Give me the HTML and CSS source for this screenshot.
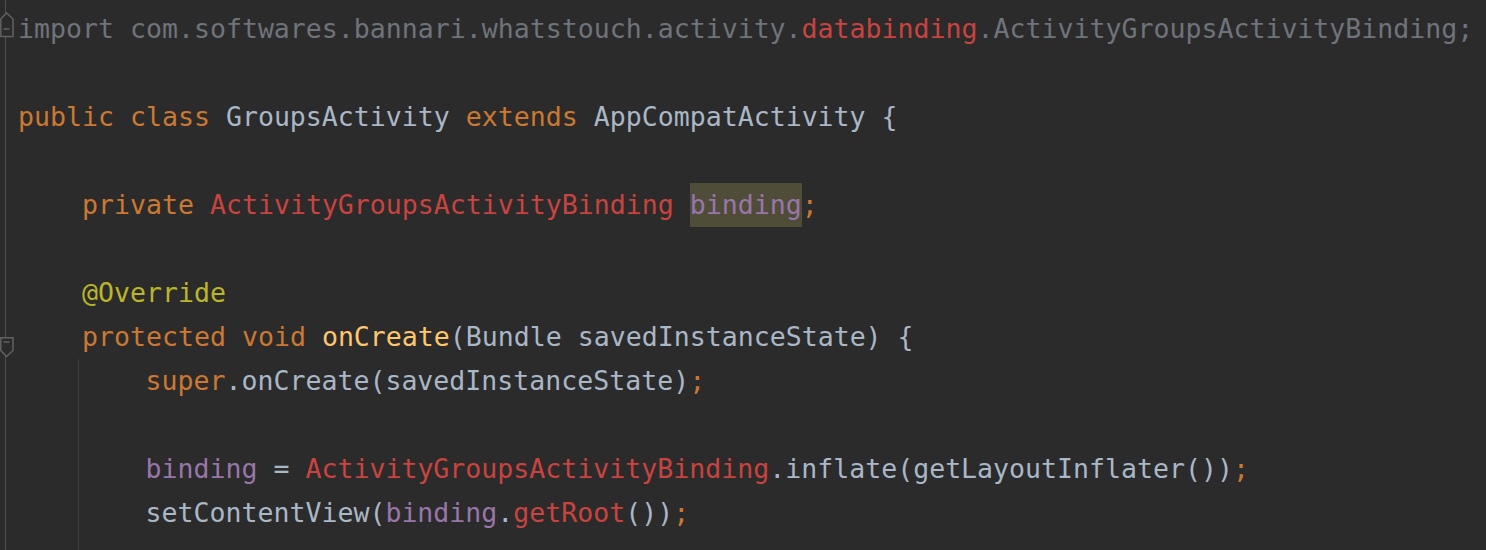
FILE: index.html
```html
<!DOCTYPE html>
<html>
<head>
<meta charset="utf-8">
<link rel="stylesheet" href="styles.css">
</head>
<body>
<div class="editor">
  <div class="gutter">
    <div class="grow"><svg class="fold-open" width="14" height="26" viewBox="0 0 14 26"><path d="M6.5 0.8 L13 7 L13 24.5 L0.8 24.5 L0.8 7 Z" fill="#2b2b2b" stroke="#626262" stroke-width="1.5"/><path d="M3.5 17 H9.5" stroke="#626262" stroke-width="1.5"/></svg></div>
    <div class="grow"></div>
    <div class="grow"></div>
    <div class="grow"></div>
    <div class="grow"></div>
    <div class="grow"></div>
    <div class="grow"></div>
    <div class="grow"><svg class="fold-close" width="14" height="21" viewBox="0 0 14 21"><path d="M0.8 0.8 L13 0.8 L13 13.5 L6.5 19.5 L0.8 13.5 Z" fill="#2b2b2b" stroke="#626262" stroke-width="1.5"/><path d="M3.5 5 H9.5" stroke="#626262" stroke-width="1.5"/></svg></div>
  </div>
  <div class="code">
    <div class="ln"><span class="dim">import com.softwares.bannari.whatstouch.activity.</span><span class="err">databinding</span><span class="dim">.ActivityGroupsActivityBinding;</span></div>
    <div class="ln"></div>
    <div class="ln"><span class="kw">public class </span>GroupsActivity <span class="kw">extends </span>AppCompatActivity {</div>
    <div class="ln"></div>
    <div class="ln i1"><span class="kw">private </span><span class="err">ActivityGroupsActivityBinding</span> <span class="fld hl">binding</span><span class="kw">;</span></div>
    <div class="ln"></div>
    <div class="ln i1"><span class="ann">@Override</span></div>
    <div class="ln i1"><span class="kw">protected void </span><span class="fn">onCreate</span>(Bundle savedInstanceState) {</div>
    <div class="block">
      <div class="ln"><span class="kw">super</span>.onCreate(savedInstanceState)<span class="kw">;</span></div>
      <div class="ln"></div>
      <div class="ln"><span class="fld">binding</span> = <span class="err">ActivityGroupsActivityBinding</span>.inflate(getLayoutInflater())<span class="kw">;</span></div>
      <div class="ln">setContentView(<span class="fld">binding</span>.<span class="err">getRoot</span>())<span class="kw">;</span></div>
      <div class="ln"></div>
    </div>
  </div>
</div>
</body>
</html>
```
FILE: styles.css
```css
html, body {
  margin: 0;
  padding: 0;
  background: #2b2b2b;
  overflow: hidden;
}
.editor {
  display: flex;
  height: 550px;
  overflow: hidden;
  font-family: "DejaVu Sans Mono", "Liberation Mono", monospace;
  font-size: 26.57px;
  color: #a9b7c6;
}
.gutter {
  width: 18px;
  flex: none;
  padding-top: 7px;
  box-sizing: border-box;
  background: linear-gradient(to right, transparent 5px, #4e4e4e 5px, #4e4e4e 6.5px, transparent 6.5px);
}
.grow {
  height: 44px;
}
.fold-open {
  display: block;
  margin-top: 5px;
}
.fold-close {
  display: block;
  margin-top: 17px;
}
.code {
  flex: 1;
  padding-top: 7px;
}
.ln {
  height: 44px;
  line-height: 44px;
  white-space: pre;
}
.i1 {
  padding-left: 64px;
}
.block {
  margin-left: 60px;
  border-left: 1.5px solid #3c3c3c;
  padding-left: 66.5px;
}
.dim { color: #6f737a; }
.err { color: #c9433f; }
.kw { color: #cc7832; }
.fld { color: #9876aa; }
.ann { color: #bbb529; }
.fn { color: #ffc66d; }
.hl {
  display: inline-block;
  background: #4f4c38;
  height: 44px;
}
```
